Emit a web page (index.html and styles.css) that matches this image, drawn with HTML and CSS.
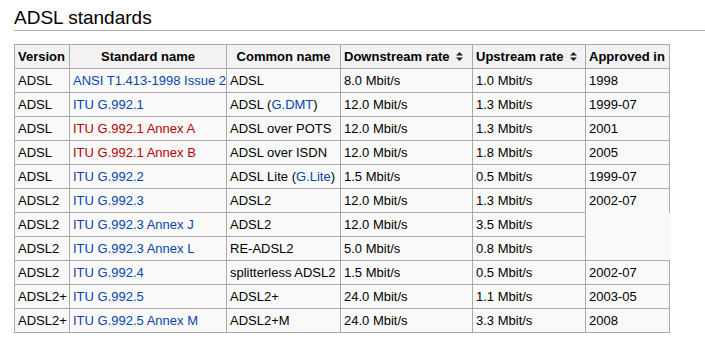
FILE: index.html
```html
<!DOCTYPE html>
<html lang="en">
<head>
  <meta charset="UTF-8" />
  <title>ADSL standards</title>
  <link rel="stylesheet" href="styles.css">
</head>
<body>

  <h2 class="section-title">ADSL standards</h2>

  <table class="wikitable">
    <colgroup>
      <col class="col-version" />
      <col class="col-standard" />
      <col class="col-common" />
      <col class="col-down" />
      <col class="col-up" />
      <col class="col-approved" />
    </colgroup>
    <thead>
      <tr>
        <th>Version</th>
        <th class="center">Standard name</th>
        <th class="center">Common name</th>
        <th><span class="sortable">Downstream rate <svg class="sort-icon" width="7" height="9" viewBox="0 0 7 9"><path d="M3.5 0 L7 3.5 L0 3.5 Z M0 5.5 L7 5.5 L3.5 9 Z" fill="#222"/></svg></span></th>
        <th><span class="sortable">Upstream rate <svg class="sort-icon" width="7" height="9" viewBox="0 0 7 9"><path d="M3.5 0 L7 3.5 L0 3.5 Z M0 5.5 L7 5.5 L3.5 9 Z" fill="#222"/></svg></span></th>
        <th>Approved in</th>
      </tr>
    </thead>
    <tbody>
      <tr>
        <td>ADSL</td>
        <td><a href="#">ANSI T1.413-1998 Issue 2</a></td>
        <td>ADSL</td>
        <td>8.0 Mbit/s</td>
        <td>1.0 Mbit/s</td>
        <td>1998</td>
      </tr>
      <tr>
        <td>ADSL</td>
        <td><a href="#">ITU G.992.1</a></td>
        <td>ADSL (<a href="#">G.DMT</a>)</td>
        <td>12.0 Mbit/s</td>
        <td>1.3 Mbit/s</td>
        <td>1999-07</td>
      </tr>
      <tr>
        <td>ADSL</td>
        <td><a href="#" class="new">ITU G.992.1 Annex A</a></td>
        <td>ADSL over POTS</td>
        <td>12.0 Mbit/s</td>
        <td>1.3 Mbit/s</td>
        <td>2001</td>
      </tr>
      <tr>
        <td>ADSL</td>
        <td><a href="#" class="new">ITU G.992.1 Annex B</a></td>
        <td>ADSL over ISDN</td>
        <td>12.0 Mbit/s</td>
        <td>1.8 Mbit/s</td>
        <td>2005</td>
      </tr>
      <tr>
        <td>ADSL</td>
        <td><a href="#">ITU G.992.2</a></td>
        <td>ADSL Lite (<a href="#">G.Lite</a>)</td>
        <td>1.5 Mbit/s</td>
        <td>0.5 Mbit/s</td>
        <td>1999-07</td>
      </tr>
      <tr>
        <td>ADSL2</td>
        <td><a href="#">ITU G.992.3</a></td>
        <td>ADSL2</td>
        <td>12.0 Mbit/s</td>
        <td>1.3 Mbit/s</td>
        <td>2002-07</td>
      </tr>
      <tr>
        <td>ADSL2</td>
        <td><a href="#">ITU G.992.3 Annex J</a></td>
        <td>ADSL2</td>
        <td>12.0 Mbit/s</td>
        <td>3.5 Mbit/s</td>
        <td rowspan="2" class="blank"></td>
      </tr>
      <tr>
        <td>ADSL2</td>
        <td><a href="#">ITU G.992.3 Annex L</a></td>
        <td>RE-ADSL2</td>
        <td>5.0 Mbit/s</td>
        <td>0.8 Mbit/s</td>
      </tr>
      <tr>
        <td>ADSL2</td>
        <td><a href="#">ITU G.992.4</a></td>
        <td>splitterless ADSL2</td>
        <td>1.5 Mbit/s</td>
        <td>0.5 Mbit/s</td>
        <td>2002-07</td>
      </tr>
      <tr>
        <td>ADSL2+</td>
        <td><a href="#">ITU G.992.5</a></td>
        <td>ADSL2+</td>
        <td>24.0 Mbit/s</td>
        <td>1.1 Mbit/s</td>
        <td>2003-05</td>
      </tr>
      <tr>
        <td>ADSL2+</td>
        <td><a href="#">ITU G.992.5 Annex M</a></td>
        <td>ADSL2+M</td>
        <td>24.0 Mbit/s</td>
        <td>3.3 Mbit/s</td>
        <td>2008</td>
      </tr>
    </tbody>
  </table>

</body>
</html>
```

FILE: styles.css
```css
* {
  margin: 0;
  padding: 0;
  box-sizing: border-box;
  font-family: 'Liberation Sans', Arial, sans-serif;
}

body {
  background: #fff;
  color: #000;
  padding: 6px 0 0 14px;
  font-size: 13px;
}

.section-title {
  font-size: 19px;
  font-weight: normal;
  line-height: 24px;
  padding-bottom: 0;
  border-bottom: 1px solid #aaa;
  margin-bottom: 13px;
}

.wikitable {
  border-collapse: collapse;
  border: 1px solid #aaa;
  background: #f9f9f9;
  table-layout: fixed;
  width: 655px;
}

.col-version { width: 55px; }
.col-standard { width: 157px; }
.col-common { width: 114px; }
.col-down { width: 132px; }
.col-up { width: 113px; }
.col-approved { width: 84px; }

.wikitable th,
.wikitable td {
  border: 1px solid #aaa;
  padding: 2px 3px;
  line-height: 19px;
  text-align: left;
  white-space: nowrap;
  overflow: hidden;
}

.wikitable th {
  background: #f2f2f2;
  font-weight: bold;
}

.wikitable th.center {
  text-align: center;
}

.wikitable td.blank {
  border-top: hidden;
  border-right: hidden;
}

.sortable {
  display: inline-flex;
  align-items: center;
  gap: 7px;
}

.sort-icon {
  display: block;
}

a {
  color: #0645ad;
  text-decoration: none;
}

a.new {
  color: #ba0000;
}
```
